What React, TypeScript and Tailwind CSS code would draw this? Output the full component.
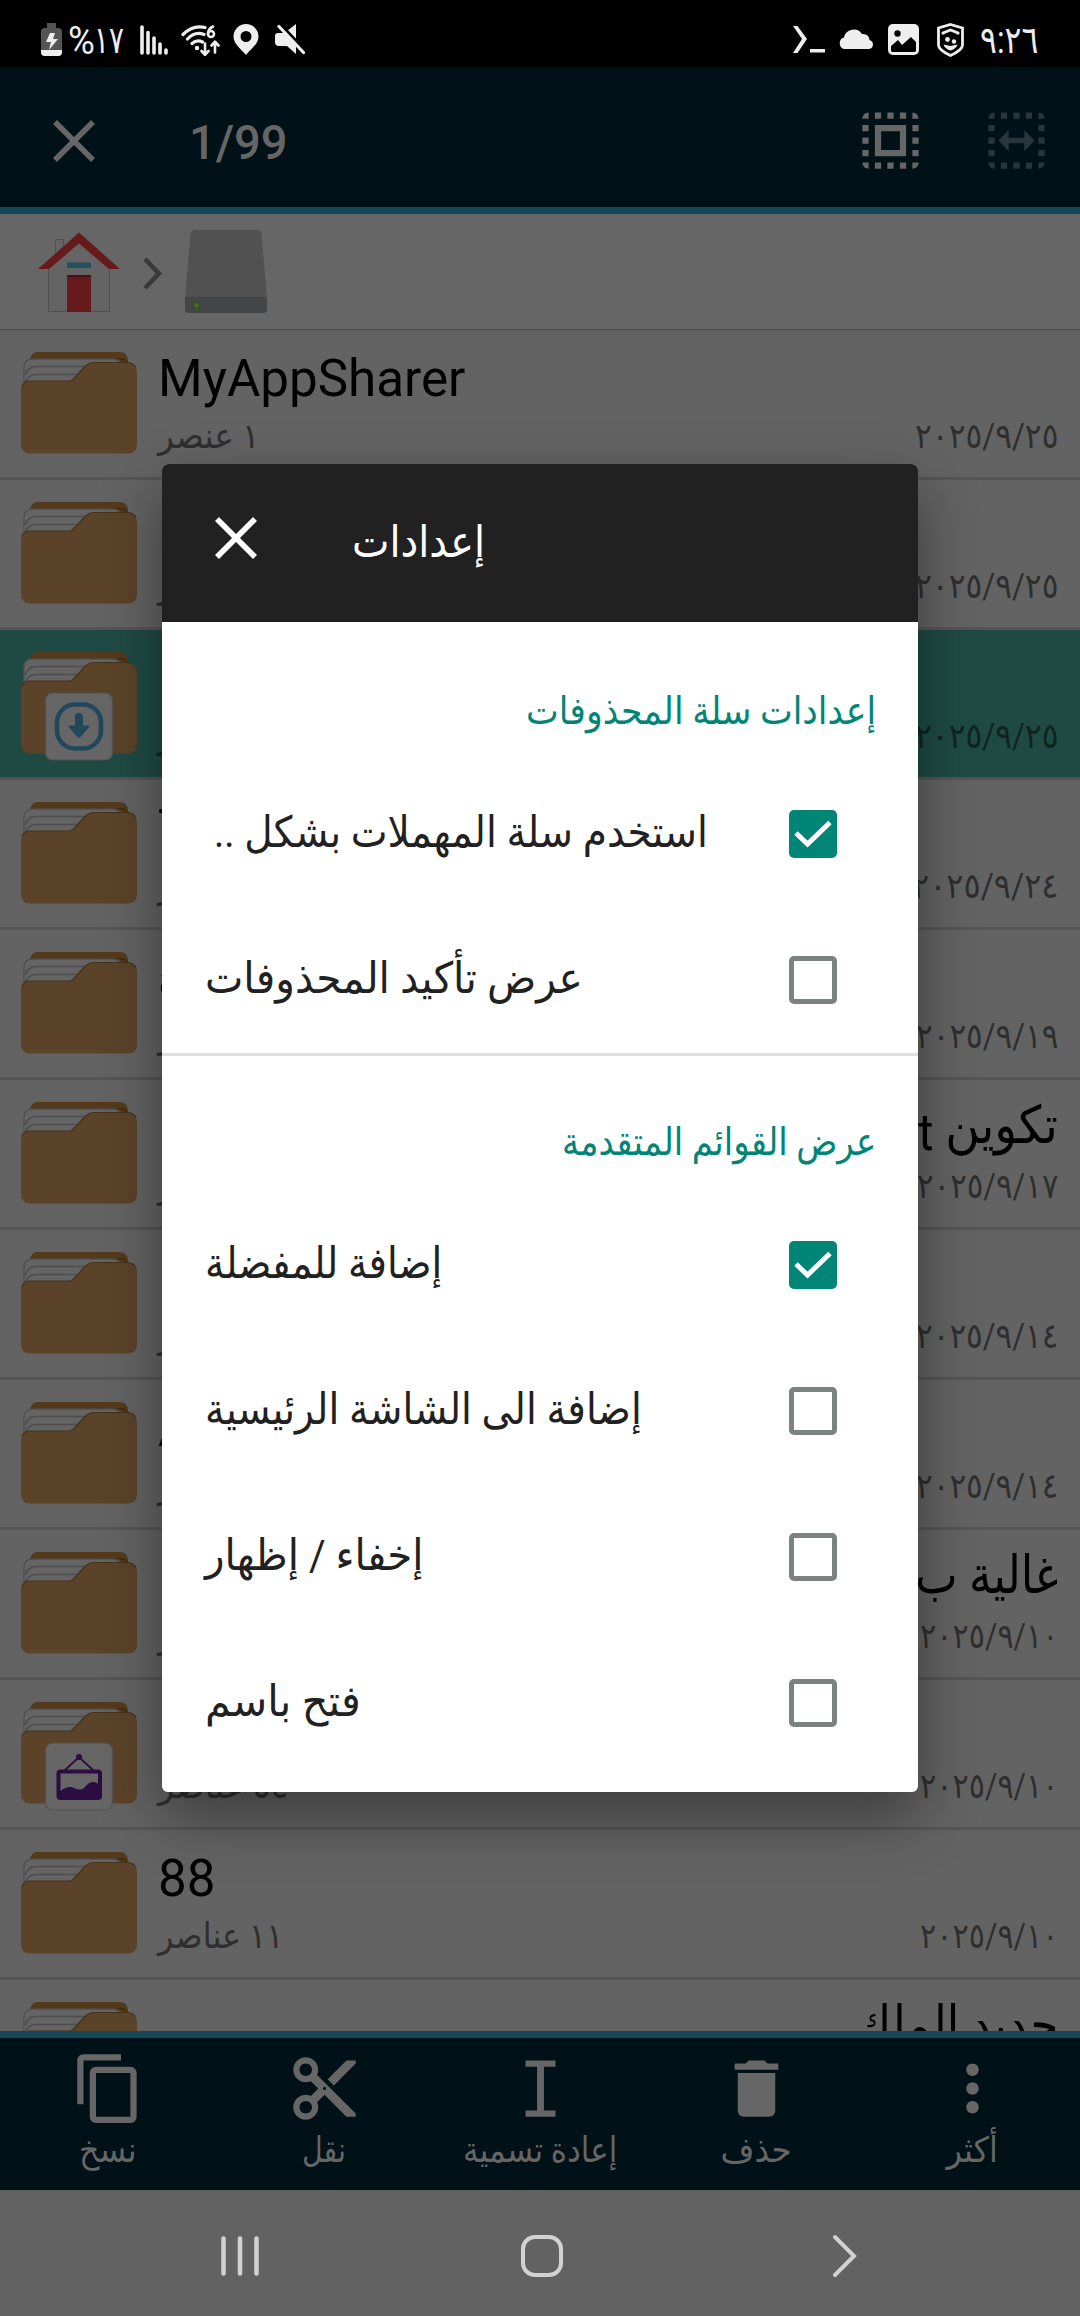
import { useLayoutEffect, useRef, useState, type ReactNode } from "react";

type Anchor = "left" | "right" | "center";

const ORIGIN: Record<Anchor, string> = {
  left: "origin-left",
  right: "origin-right",
  center: "origin-center",
};

/* Text condensed or widened horizontally so that it occupies exactly `w` pixels. */
function Fit({ w, anchor, className = "", children }: { w: number; anchor: Anchor; className?: string; children: ReactNode }) {
  const ref = useRef<HTMLSpanElement>(null);
  const [scale, setScale] = useState(1);
  useLayoutEffect(() => {
    if (ref.current) setScale(w / ref.current.offsetWidth);
  }, [w]);
  return (
    <span ref={ref} className={`inline-block whitespace-nowrap ${ORIGIN[anchor]} ${className}`} style={{ transform: `scaleX(${scale})` }}>
      {children}
    </span>
  );
}

function StatusBar() {
  return (
    <div className="flex h-[67px] shrink-0 items-center justify-between bg-black pl-[41px] pr-[42px] pt-3 text-[#eeeeee]">
      <div className="flex items-center">
        <svg className="h-[34px] w-[21px]" viewBox="0 0 21 34">
          <path d="M6 0h9v5h2a4 4 0 0 1 4 4v20a4 4 0 0 1-4 4H4a4 4 0 0 1-4-4V9a4 4 0 0 1 4-4h2z" fill="#555" />
          <path d="M0 27h21v2a4 4 0 0 1-4 4H4a4 4 0 0 1-4-4z" fill="#eee" />
          <path d="M9 10h5l-2 6h5L8 27l2-8H5z" fill="#eee" />
        </svg>
        <div className="ml-[6px] flex w-[59px] translate-y-[1px] items-center text-[38px] leading-[34px]">
          <Fit w={27} anchor="left" className="w-max">%</Fit>
          <div className="-ml-[1px] flex w-[30px] -translate-x-[1px] -translate-y-[1px]">
            <Fit w={30} anchor="left">١٧</Fit>
          </div>
        </div>
        <svg className="ml-[13px] h-[30px] w-[28px]" viewBox="0 0 28 30" stroke="#eee" strokeWidth="3.6" strokeLinecap="round">
          <path d="M2 2v26M8 7.5v20.5M14 13v15M20 19v9M26 25v3" />
        </svg>
        <svg className="ml-[13px] h-[32px] w-[39px]" viewBox="0 0 39 32" fill="none" stroke="#eee" strokeWidth="3.2" strokeLinecap="round" strokeLinejoin="round">
          <path d="M2 10.500Q12 .5 24 3.500M6.500 15Q14 7 23 10.500M11 19.500Q16 15 21.500 18" />
          <circle cx="16" cy="24" r="2.2" fill="#eee" stroke="none" />
          <path d="M32 2.500Q27 5 27 10M24 19.500v11M20.500 27l3.500 3.800 3.500-3.800M34 28.500V18.500M30.500 21.500l3.500-3.800 3.500 3.800" strokeWidth="2.6" />
          <circle cx="30" cy="10" r="3" strokeWidth="2.6" />
        </svg>
        <svg className="ml-[13px] h-[31px] w-[26px]" viewBox="0 0 26 31">
          <path fillRule="evenodd" fill="#eee" d="M13 0a12.500 12.500 0 0 1 12.500 12.500C25.500 20 18 25 13 31 8 25 .5 20 .5 12.500A12.500 12.500 0 0 1 13 0zm0 7a5.500 5.500 0 1 0 0 11 5.500 5.500 0 0 0 0-11z" />
        </svg>
        <svg className="ml-[16px] h-[31px] w-[30px]" viewBox="0 0 30 31" fill="#eee">
          <path d="M21 0v16L12 7zM3 9h6l12 12v9l-9-8H4a4 4 0 0 1-4-4v-6a3 3 0 0 1 3-3z" />
          <path d="M7 2l22 23" stroke="#000" strokeWidth="3" />
          <path d="M4 2.500L28.500 28.500" stroke="#eee" strokeWidth="3.2" strokeLinecap="round" />
        </svg>
      </div>
      <div className="flex items-center">
        <svg className="h-[30px] w-[33px]" viewBox="0 0 33 30" fill="#eee">
          <path d="M0 1h4.500L14 14 4.500 28H0l9-14zM17 24h15v3.500H17z" />
        </svg>
        <svg className="ml-[12px] mb-[3px] h-[21px] w-[36px]" viewBox="0 0 36 21" fill="#eee">
          <path d="M6 21a6 6 0 0 1 0-11.500A10 10 0 0 1 24 6c5 0 7 2 7.500 6A4.600 4.600 0 0 1 31 21z" />
        </svg>
        <svg className="ml-[14px] h-[31px] w-[31px]" viewBox="0 0 31 31">
          <rect width="31" height="31" rx="5" fill="#eee" />
          <circle cx="9.500" cy="9.500" r="3.200" />
          <path d="M3 22l7-6 4 5 9-8 5 5v8.500q0 1.500-1.500 1.500H4.500Q3 28 3 26.500z" />
        </svg>
        <svg className="ml-[18px] h-[34px] w-[27px]" viewBox="0 0 27 34" fill="none" stroke="#eee" strokeWidth="2.8">
          <path d="M13.500 1.500L25.500 5v17q0 5-12 10.500Q1.500 27 1.500 22V5z" />
          <path d="M6 11.500V10l7.500-3 7.500 3v1.500" />
          <circle cx="10.500" cy="16.500" r="2.400" fill="#eee" stroke="none" />
          <circle cx="17" cy="18.500" r="2.200" fill="#eee" stroke="none" />
          <path d="M6.500 21.500l7 1.500 7-1.500q-1 4-7 6-6-2-7-6z" fill="#eee" stroke="none" />
        </svg>
        <div className="ml-[18px] flex w-[56px] justify-end text-[38px] leading-[34px]">
          <Fit w={58} anchor="right">٩:٢٦</Fit>
        </div>
      </div>
    </div>
  );
}

function Cross({ color }: { color: string }) {
  return (
    <svg className="h-[42px] w-[42px]" viewBox="0 0 42 42" stroke={color} strokeWidth="5.6">
      <path d="M2 2l38 38M40 2L2 40" />
    </svg>
  );
}

const DOTS =
  "M3 5h2V3c-1.1 0-2 .9-2 2zm0 8h2v-2H3v2zm4 8h2v-2H7v2zM3 9h2V7H3v2zm10-6h-2v2h2V3zm6 0v2h2c0-1.1-.9-2-2-2zM5 21v-2H3c0 1.1.9 2 2 2zm-2-4h2v-2H3v2zM9 3H7v2h2V3zm2 18h2v-2h-2v2zm8-8h2v-2h-2v2zm0 8c1.1 0 2-.9 2-2h-2v2zm0-12h2V7h-2v2zm0 8h2v-2h-2v2zm-4 4h2v-2h-2v2zm0-16h2V3h-2v2z";

function Toolbar() {
  return (
    <div className="flex h-[147px] shrink-0 items-center border-b-[7px] border-[#154759] bg-[#001117] pl-[53px] pr-[26px] pt-[7px]">
      <Cross color="#666666" />
      <span className="ml-[94px] mt-[4px] flex-1 text-[48px] font-medium text-[#666666]">
        <Fit w={99} anchor="left">1/99</Fit>
      </span>
      <svg className="h-[75px] w-[75px]" viewBox="0 0 24 24" fill="#666">
        <path d={DOTS + "M7 17h10V7H7v10zm2-8h6v6H9V9z"} />
      </svg>
      <svg className="ml-[51px] h-[75px] w-[75px]" viewBox="0 0 24 24" fill="#28363b">
        <path d={DOTS + "M6.200 12l3.300-3.400v2.500h5V8.600l3.300 3.400-3.300 3.400v-2.500h-5v2.500z"} />
      </svg>
    </div>
  );
}

function Breadcrumb() {
  return (
    <div className="flex h-[116px] shrink-0 items-start border-b border-[#4b4b4b] bg-[#666666] pl-[38px] pt-[15px]">
      <svg className="h-[86px] w-[82px]" viewBox="0 0 82 86">
        <rect x="17.500" y="10.500" width="8" height="20" fill="#656565" stroke="#4d5052" />
        <path d="M10.500 36L41 10l30.500 26v46.500h-61z" fill="#646464" stroke="#4c4f51" />
        <path d="M41 3.500L82 40H71L41 14.500 11 40H0z" fill="#661a1c" />
        <rect x="29" y="33.500" width="24" height="5.500" fill="#235061" />
        <rect x="29" y="46" width="24" height="37" fill="#661a1c" />
        <rect x="29" y="46" width="24" height="2" fill="#491114" />
      </svg>
      <svg className="ml-[23px] mt-[28px] h-[33px] w-[20px]" viewBox="0 0 20 33" fill="none" stroke="#393939" strokeWidth="4.5">
        <path d="M2 2l14 14.500L2 31" />
      </svg>
      <svg className="ml-[21px] mt-[1px] h-[84px] w-[84px]" viewBox="0 0 84 84">
        <path d="M11 0h62q4 0 4.500 4L83 68H1L6.500 4Q7 0 11 0z" fill="#515151" />
        <path d="M1 67h82v13q0 3-3 3H4q-3 0-3-3z" fill="#434546" />
        <circle cx="12.500" cy="75.500" r="3" fill="#4a6b1c" stroke="#2f5022" strokeWidth="1.2" />
      </svg>
    </div>
  );
}

function Folder({ badge }: { badge?: "download" | "picture" }) {
  return (
    <svg className="h-[118px] w-[120px] shrink-0" viewBox="0 0 120 118">
      <path d="M18 1h82q9 0 9 9v25H11V8q2-7 7-7z" fill="#543a1a" />
      <path d="M12 8h92q3 1 4 4" fill="none" stroke="#3f2b12" strokeWidth="1.5" />
      <path d="M5 40V16q0-8 9-8h79q7 0 9 5v30z" fill="#646464" stroke="#505050" strokeWidth="1.3" />
      <path d="M6 24q3-8 10-8.500h60M6 32q3-8 10-8.500h58" fill="none" stroke="#4c4c4c" strokeWidth="1.5" />
      <path d="M11 30h40q1.500 0 3-1.500L66 15.500q4-4 9-4h32.500q10.500 0 10.500 10V93q0 9.500-9.500 9.500h-97Q2 102.500 2 93V38.500Q2 30 11 30z" fill="#5a4328" />
      <path d="M3 35q2-5 8-5h40q1.500 0 3-1.500L66 15.500q4-4 9-4h32.500q7 0 9.500 5" fill="none" stroke="#46321a" strokeWidth="1.2" />
      {badge && <rect x="26.500" y="42" width="67" height="67" rx="7" fill="#666" stroke="#525252" strokeWidth="1.2" />}
      {badge === "download" && (
        <g fill="#20485a">
          <rect x="38" y="53.500" width="44" height="44" rx="18" fill="none" stroke="#20485a" strokeWidth="4.5" />
          <path d="M60 62q4 0 4 4v8.500h5q2.500 0 .5 2.500l-8 9q-1.500 1.500-3 0l-8-9q-2-2.500.5-2.500h5V66q0-4 4-4z" />
        </g>
      )}
      {badge === "picture" && (
        <g fill="none" stroke="#2b0d41">
          <rect x="39.500" y="70.500" width="41.500" height="26.500" rx="2" strokeWidth="4" />
          <path d="M45 70l15-14 15 14" strokeWidth="1.8" />
          <circle cx="60" cy="56" r="3" fill="#2b0d41" stroke="none" />
          <path d="M40 91q9-7 15-4t10 0q5-7 10-6t6 5v11H40z" fill="#2b0d41" stroke="none" />
        </g>
      )}
    </svg>
  );
}

interface Row {
  name?: ReactNode;
  nameW?: number;
  rtl?: boolean;
  count: string;
  countW: number;
  date: string;
  dateW: number;
  selected?: boolean;
  badge?: "download" | "picture";
}

const ROWS: Row[] = [
  { name: "MyAppSharer", nameW: 307, count: "١ عنصر", countW: 102, date: "٢٠٢٥/٩/٢٥", dateW: 143 },
  { count: "٣ عناصر", countW: 108, date: "٢٠٢٥/٩/٢٥", dateW: 143 },
  { count: "٧ عناصر", countW: 108, date: "٢٠٢٥/٩/٢٥", dateW: 143, selected: true, badge: "download" },
  { name: "T", count: "٢ عناصر", countW: 108, date: "٢٠٢٥/٩/٢٤", dateW: 146 },
  { name: "a", count: "٤ عناصر", countW: 108, date: "٢٠٢٥/٩/١٩", dateW: 142 },
  {
    name: (
      <>
        تكوين <span className="inline-block translate-y-[7px]">t</span>
      </>
    ),
    nameW: 140,
    rtl: true,
    count: "٤ عناصر",
    countW: 108,
    date: "٢٠٢٥/٩/١٧",
    dateW: 141,
  },
  { count: "٤ عناصر", countW: 108, date: "٢٠٢٥/٩/١٤", dateW: 142 },
  { name: "A", count: "٤ عناصر", countW: 108, date: "٢٠٢٥/٩/١٤", dateW: 142 },
  { name: "غالية ب", nameW: 143, rtl: true, count: "٤ عناصر", countW: 108, date: "٢٠٢٥/٩/١٠", dateW: 138 },
  { count: "٥٤ عناصر", countW: 130, date: "٢٠٢٥/٩/١٠", dateW: 138, badge: "picture" },
  { name: "88", nameW: 57, count: "١١ عناصر", countW: 125, date: "٢٠٢٥/٩/١٠", dateW: 138 },
  { name: "جديد الملك", nameW: 205, rtl: true, count: "٤ عناصر", countW: 108, date: "٢٠٢٥/٩/١٠", dateW: 138 },
];

function FileRow({ row }: { row: Row }) {
  return (
    <div
      className={`flex h-[150px] shrink-0 items-start border-b-[3px] border-[#555555] pl-[19px] pr-[22px] ${row.selected ? "bg-[#1f4a44]" : "bg-[#636363]"}`}
    >
      <div className="pt-[21px]">
        <Folder badge={row.badge} />
      </div>
      <div className="ml-[19px] flex min-w-0 flex-1 flex-col gap-[8px] pt-[19px]">
        <div className={`flex h-[60px] text-[52px] leading-[60px] text-black ${row.rtl ? "-translate-y-[3px] justify-end" : ""}`}>
          {row.name && row.nameW ? (
            <Fit w={row.nameW} anchor={row.rtl ? "right" : "left"}>
              <bdi dir={row.rtl ? "rtl" : "ltr"}>{row.name}</bdi>
            </Fit>
          ) : (
            row.name
          )}
        </div>
        <div className={`flex h-[40px] justify-between text-[35px] leading-[40px] ${row.selected ? "text-[#0f2421]" : "text-[#2e2e2e]"}`}>
          <Fit w={row.countW} anchor="left">
            <bdi dir="rtl">{row.count}</bdi>
          </Fit>
          <Fit w={row.dateW} anchor="right">{row.date}</Fit>
        </div>
      </div>
    </div>
  );
}

const ACTIONS = [
  {
    label: "نسخ",
    w: 58,
    d: "M16 1H4c-1.1 0-2 .9-2 2v14h2V3h12V1zm3 4H8c-1.1 0-2 .9-2 2v14c0 1.1.9 2 2 2h11c1.1 0 2-.9 2-2V7c0-1.1-.9-2-2-2zm0 16H8V7h11v14z",
  },
  {
    label: "نقل",
    w: 44,
    d: "M9.64 7.64c.23-.5.36-1.05.36-1.64 0-2.21-1.79-4-4-4S2 3.79 2 6s1.79 4 4 4c.59 0 1.14-.13 1.64-.36L10 12l-2.36 2.36C7.14 14.13 6.59 14 6 14c-2.21 0-4 1.79-4 4s1.79 4 4 4 4-1.79 4-4c0-.59-.13-1.14-.36-1.64L12 14l7 7h3v-1L9.64 7.64zM6 8c-1.1 0-2-.89-2-2s.9-2 2-2 2 .89 2 2-.9 2-2 2zm0 12c-1.1 0-2-.89-2-2s.9-2 2-2 2 .89 2 2-.9 2-2 2zm6-7.5c-.28 0-.5-.22-.5-.5s.22-.5.5-.5.5.22.5.5-.22.5-.5.5zM19 3l-6 6 2 2 7-7V3z",
  },
  { label: "إعادة تسمية", w: 154, d: "M7.200 3h9.600v2h-3.700v14h3.700v2H7.200v-2h3.700V5H7.200z" },
  { label: "حذف", w: 71, d: "M6 19c0 1.1.9 2 2 2h8c1.1 0 2-.9 2-2V7H6v12zM19 4h-3.500l-1-1h-5l-1 1H5v2h14V4z" },
  {
    label: "أكثر",
    w: 51,
    d: "M12 8c1.1 0 2-.9 2-2s-.9-2-2-2-2 .9-2 2 .9 2 2 2zm0 2c-1.1 0-2 .9-2 2s.9 2 2 2 2-.9 2-2-.9-2-2-2zm0 6c-1.1 0-2 .9-2 2s.9 2 2 2 2-.9 2-2-.9-2-2-2z",
  },
];

function ActionBar() {
  return (
    <div className="grid h-[159px] shrink-0 grid-cols-5 border-t-[7px] border-[#154759] bg-[#001117]">
      {ACTIONS.map((a) => (
        <div key={a.label} className="flex flex-col items-center pt-[13px]">
          <svg className="h-[75px] w-[75px]" viewBox="0 0 24 24" fill="#666">
            <path d={a.d} />
          </svg>
          <Fit w={a.w} anchor="center" className="mt-[3px] text-[35px] leading-[44px] text-[#666666]">
            {a.label}
          </Fit>
        </div>
      ))}
    </div>
  );
}

function NavBar() {
  return (
    <div className="flex h-[126px] shrink-0 items-center bg-[#626262] pl-[219px] pt-[6px]">
      <svg className="h-[44px] w-[42px]" viewBox="0 0 42 44" stroke="#d2d2d2" strokeWidth="4.5" strokeLinecap="round">
        <path d="M4.500 4.500v35M21 4.500v35M37.500 4.500v35" />
      </svg>
      <svg className="ml-[259px] h-[44px] w-[44px]" viewBox="0 0 44 44" fill="none" stroke="#d2d2d2" strokeWidth="4">
        <rect x="3" y="3" width="38" height="38" rx="12" />
      </svg>
      <svg className="ml-[267px] h-[44px] w-[28px]" viewBox="0 0 28 44" fill="none" stroke="#d2d2d2" strokeWidth="4" strokeLinecap="round">
        <path d="M4 3l19 19L4 41" />
      </svg>
    </div>
  );
}

function Option({ label, w, checked, indent }: { label: string; w: number; checked?: boolean; indent?: boolean }) {
  return (
    <div className="flex h-[146px] items-center justify-between pl-[43px] pr-[81px]">
      <div className={`mb-[4px] flex w-[520px] text-[43px] leading-[60px] text-[#212121] ${indent ? "pl-[9px]" : ""}`}>
        <Fit w={w} anchor="left">
          <bdi dir="rtl">{label}</bdi>
        </Fit>
      </div>
      {checked ? (
        <div className="flex h-[48px] w-[48px] items-center justify-center rounded-[5px] bg-[#018577]">
          <svg className="h-[48px] w-[48px]" viewBox="0 0 48 48" fill="none" stroke="#fff" strokeWidth="5">
            <path d="M7 23l11.500 11L41 12.500" />
          </svg>
        </div>
      ) : (
        <div className="h-[48px] w-[48px] rounded-[5px] border-[5px] border-[#7c827f]" />
      )}
    </div>
  );
}

function SectionTitle({ w, children }: { w: number; children: ReactNode }) {
  return (
    <div className="flex h-[136px] justify-end pr-[42px] pt-[56px] text-[38px] leading-[60px] text-[#018577]">
      <Fit w={w} anchor="right">{children}</Fit>
    </div>
  );
}

function SettingsDialog() {
  return (
    <div className="absolute left-[162px] top-[464px] flex h-[1328px] w-[756px] flex-col overflow-hidden rounded-[6px] bg-white shadow-[0_24px_60px_rgba(0,0,0,0.4)]">
      <div className="flex h-[158px] shrink-0 items-center bg-[#212121] pl-[53px]">
        <div className="-mt-[10px]">
          <Cross color="#ffffff" />
        </div>
        <div className="-mt-[3px] ml-[95px] text-[44px] leading-[60px] text-white">
          <Fit w={133} anchor="left">إعدادات</Fit>
        </div>
      </div>
      <div className="flex flex-col pt-[3px]">
        <SectionTitle w={350}>إعدادات سلة المحذوفات</SectionTitle>
        <Option label="استخدم سلة المهملات بشكل .." w={494} checked indent />
        <Option label="عرض تأكيد المحذوفات" w={378} />
        <div className="h-[3px] bg-[#e0e0e0]" />
        <SectionTitle w={314}>عرض القوائم المتقدمة</SectionTitle>
        <Option label="إضافة للمفضلة" w={237} checked />
        <Option label="إضافة الى الشاشة الرئيسية" w={437} />
        <Option label="إخفاء / إظهار" w={219} />
        <Option label="فتح باسم" w={156} />
      </div>
    </div>
  );
}

export default function App() {
  return (
    <div className="relative flex h-[2316px] w-[1080px] flex-col overflow-hidden bg-[#636363] font-['Roboto','DejaVu_Sans',sans-serif]">
      <StatusBar />
      <Toolbar />
      <Breadcrumb />
      <div className="flex h-[1701px] shrink-0 flex-col overflow-hidden">
        {ROWS.map((row, i) => (
          <FileRow key={i} row={row} />
        ))}
      </div>
      <ActionBar />
      <NavBar />
      <SettingsDialog />
    </div>
  );
}
